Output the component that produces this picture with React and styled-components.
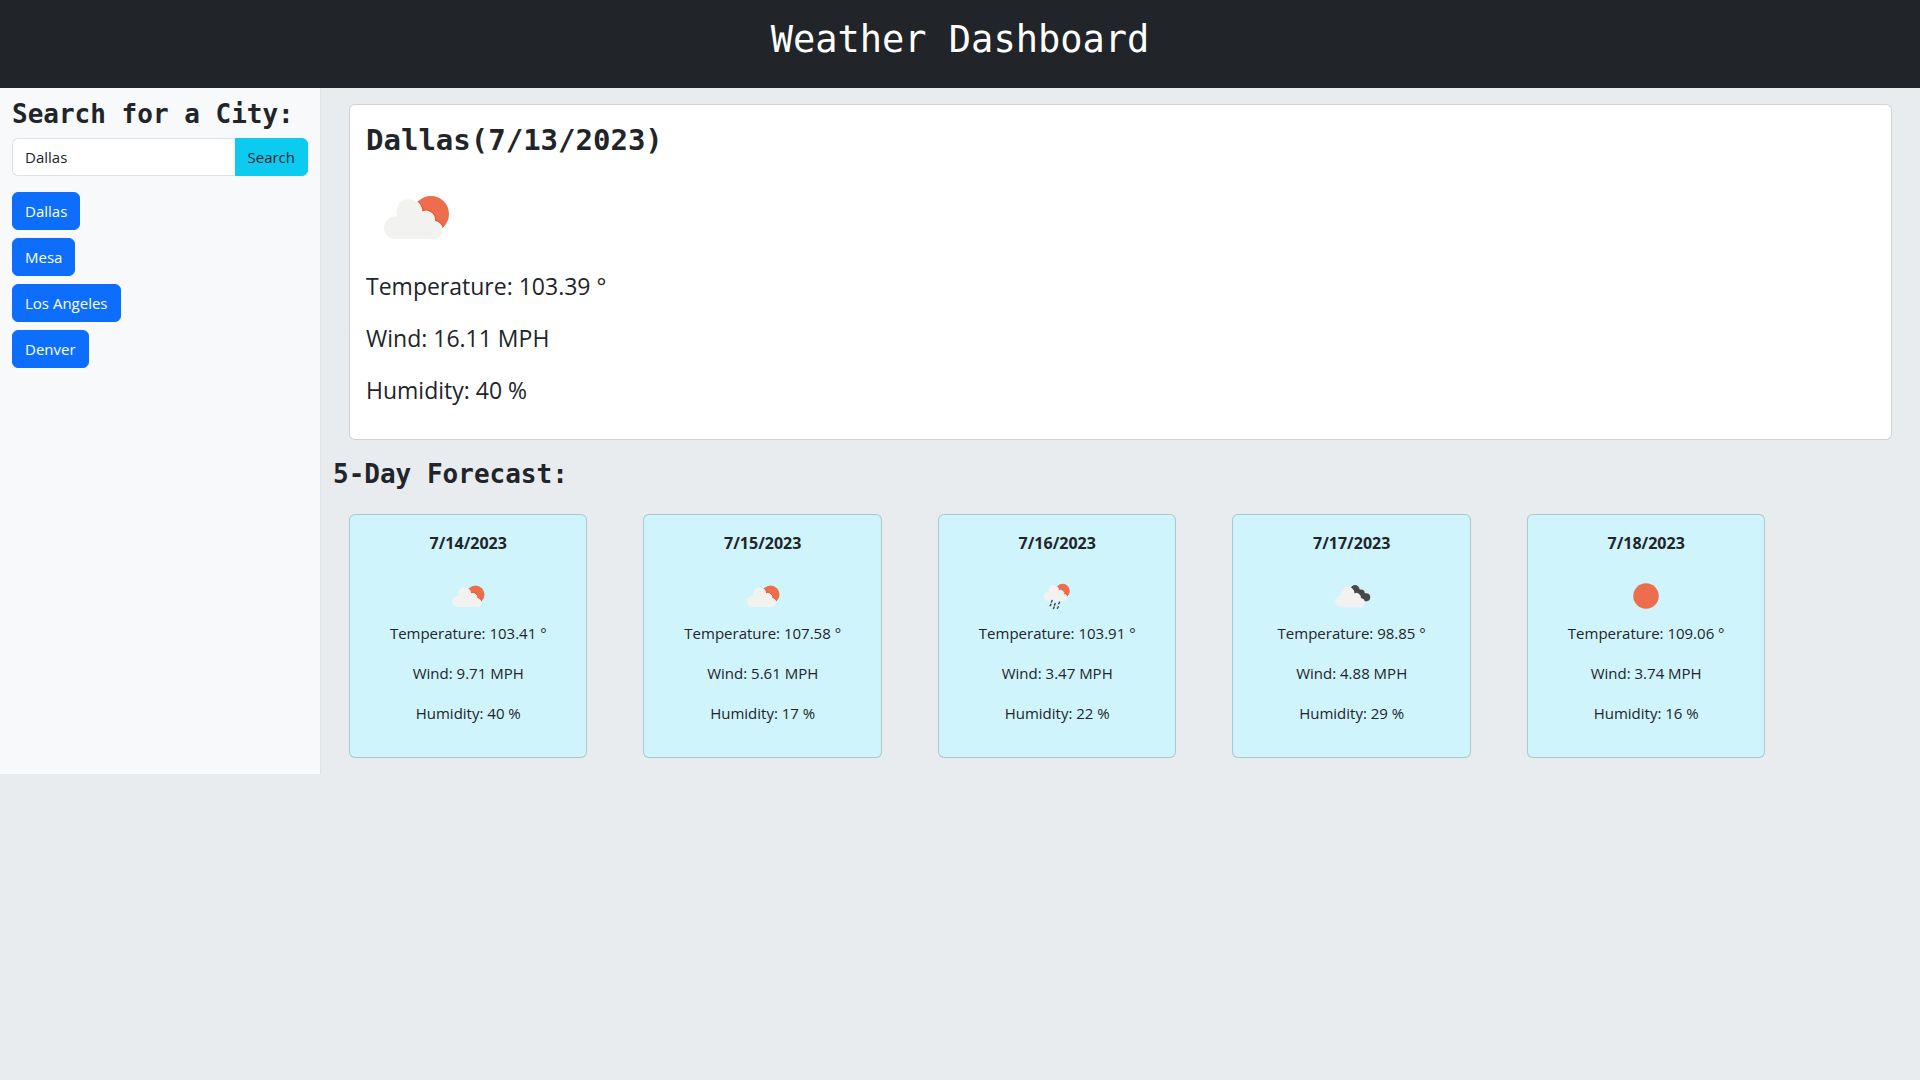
import React, { useState } from "react";
import styled, { createGlobalStyle } from "styled-components";

const SANS = '"Segoe UI", "Open Sans", "Noto Sans", sans-serif';
const MONO = 'Consolas, "DejaVu Sans Mono", "Liberation Mono", monospace';

const GlobalStyle = createGlobalStyle`
  *, *::before, *::after { box-sizing: border-box; }
  body {
    margin: 0;
    background: #e9ecef;
    color: #212529;
    font: 400 15px/24px ${SANS};
  }
  h1, h2, h3, p, ul { margin: 0; padding: 0; }
`;

const Header = styled.header`
  padding: 16px 16px 24px;
  background: #212529;
  color: #fff;
  text-align: center;
`;

const PageTitle = styled.h1`
  font: 400 37px/48px ${MONO};
`;

const Layout = styled.div`
  display: grid;
  grid-template-columns: minmax(0, 1fr) minmax(0, 5fr);
`;

const Sidebar = styled.aside`
  padding: 8px 12px;
  background: #f8f9fa;
`;

const Main = styled.main`
  padding: 0 12px;
  border-left: 1px solid #dee2e6;
`;

const SectionTitle = styled.h2`
  margin-bottom: 6px;
  font: 700 26px/36px ${MONO};
`;

const SearchForm = styled.form`
  display: flex;
  margin-bottom: 16px;
`;

const SearchInput = styled.input`
  flex: 1;
  min-width: 0;
  height: 38px;
  padding: 6px 12px;
  border: 1px solid #dee2e6;
  border-right: 0;
  border-radius: 6px 0 0 6px;
  background: #fff;
  color: #212529;
  font: inherit;
`;

const Button = styled.button`
  height: 38px;
  padding: 6px 12px;
  border: 1px solid #0d6efd;
  border-radius: 6px;
  background: #0d6efd;
  color: #fff;
  font: inherit;
  cursor: pointer;
`;

const SearchButton = styled(Button)`
  border-color: #0dcaf0;
  border-radius: 0 6px 6px 0;
  background: #0dcaf0;
  color: #212529;
`;

const History = styled.ul`
  display: flex;
  flex-direction: column;
  align-items: flex-start;
  gap: 8px;
  list-style: none;
`;

const HistoryItem = styled.li`
  display: flex;
`;

const Card = styled.article`
  margin: 16px;
  padding: 16px;
  border: 1px solid rgba(0, 0, 0, 0.175);
  border-radius: 6px;
  background: #fff;
`;

const CurrentTitle = styled.h2`
  margin-bottom: 8px;
  font: 700 29px/38px ${MONO};
`;

const CurrentReading = styled.p`
  margin-bottom: 14px;
  font-size: 23px;
  line-height: 38px;
`;

const Forecast = styled.div`
  display: flex;
  flex-wrap: wrap;
`;

const ForecastCard = styled(Card)`
  width: calc(100% / 6 - 24px);
  margin-right: 40px;
  background: #cff4fc;
  text-align: center;
`;

const ForecastDate = styled.h3`
  margin-bottom: 16px;
  font-size: 16px;
  font-weight: 700;
  line-height: 24px;
`;

const Reading = styled.p`
  margin-bottom: 16px;
`;

const IconSvg = styled.svg`
  display: block;
  width: ${(p) => p.$size}px;
  height: ${(p) => p.$size}px;
  margin: ${(p) => (p.$centered ? "0 auto" : "0")};
`;

const CLOUD =
  "M29.3 72 A11.3 11.3 0 0 1 29.3 49.4 H31.2 A12.5 12.5 0 1 1 55.2 46 A8.3 8.3 0 0 1 67.8 54.8 A8.7 8.7 0 0 1 69.4 72 Z";

function SunCloud({ id }) {
  return (
    <>
      <clipPath id={id}>
        <circle cx="65" cy="47" r="18" />
      </clipPath>
      <circle cx="65" cy="47" r="18" fill="#ec6e4c" />
      <g clipPath={`url(#${id})`} fill="none">
        <path d={CLOUD} stroke="#e9532a" strokeWidth="4" />
        <path d={CLOUD} stroke="#fdf6f4" strokeWidth="2" />
      </g>
      <path d={CLOUD} fill="#f2f2f0" />
    </>
  );
}

const DROPS = [[39.6, 60.5], [54.3, 64], [37, 68], [45.6, 66.7], [43.6, 73.6], [51.6, 73]];

function WeatherIcon({ kind, label, size, centered, id }) {
  return (
    <IconSvg viewBox="0 0 100 100" role="img" aria-label={label} $size={size} $centered={centered}>
      {kind === "sun" && <circle cx="50" cy="50" r="25.5" fill="#ec6e4c" />}
      {kind === "partly" && <SunCloud id={id} />}
      {kind === "rain" && (
        <>
          <g transform="translate(9.2 2.4) scale(0.8)">
            <SunCloud id={id} />
          </g>
          <g stroke="#484848" strokeWidth="3" strokeLinecap="round">
            {DROPS.map(([x, y]) => (
              <line key={x} x1={x + 0.7} y1={y - 1.5} x2={x - 0.7} y2={y + 1.5} />
            ))}
          </g>
        </>
      )}
      {kind === "clouds" && (
        <g transform="translate(-1 0)">
          <g fill="#484848">
            <circle cx="57" cy="37.3" r="9.2" />
            <circle cx="69" cy="44.5" r="7.5" />
            <circle cx="79.4" cy="52.3" r="8" />
            <path d="M52 42 L62 34 L79 46 L78 60.3 L66 58 Z" />
          </g>
          <path d={CLOUD} fill="#f2f2f0" stroke="#e6f7fb" strokeWidth="1.5" />
          <path d={CLOUD} fill="#f2f2f0" />
        </g>
      )}
    </IconSvg>
  );
}

const CITIES = ["Dallas", "Mesa", "Los Angeles", "Denver"];

const DAYS = [
  { date: "7/14/2023", kind: "partly", label: "Partly cloudy", temp: "103.41", wind: "9.71", humidity: 40 },
  { date: "7/15/2023", kind: "partly", label: "Partly cloudy", temp: "107.58", wind: "5.61", humidity: 17 },
  { date: "7/16/2023", kind: "rain", label: "Rain", temp: "103.91", wind: "3.47", humidity: 22 },
  { date: "7/17/2023", kind: "clouds", label: "Broken clouds", temp: "98.85", wind: "4.88", humidity: 29 },
  { date: "7/18/2023", kind: "sun", label: "Clear sky", temp: "109.06", wind: "3.74", humidity: 16 },
];

export default function App() {
  const [query, setQuery] = useState("Dallas");
  return (
    <>
      <GlobalStyle />
      <Header>
        <PageTitle>Weather Dashboard</PageTitle>
      </Header>
      <Layout>
        <Sidebar>
          <SectionTitle>
            <label htmlFor="city">Search for a City:</label>
          </SectionTitle>
          <SearchForm onSubmit={(e) => e.preventDefault()}>
            <SearchInput id="city" type="text" value={query} onChange={(e) => setQuery(e.target.value)} />
            <SearchButton type="submit">Search</SearchButton>
          </SearchForm>
          <History>
            {CITIES.map((city) => (
              <HistoryItem key={city}>
                <Button type="button" onClick={() => setQuery(city)}>{city}</Button>
              </HistoryItem>
            ))}
          </History>
        </Sidebar>
        <Main>
          <Card>
            <CurrentTitle>Dallas(7/13/2023)</CurrentTitle>
            <WeatherIcon kind="partly" label="Partly cloudy" size={100} id="sun-current" />
            <CurrentReading>Temperature: 103.39 °</CurrentReading>
            <CurrentReading>Wind: 16.11 MPH</CurrentReading>
            <CurrentReading>Humidity: 40 %</CurrentReading>
          </Card>
          <SectionTitle>5-Day Forecast:</SectionTitle>
          <Forecast>
            {DAYS.map((day, i) => (
              <ForecastCard key={day.date}>
                <ForecastDate>{day.date}</ForecastDate>
                <WeatherIcon kind={day.kind} label={day.label} size={50} centered id={`sun-${i}`} />
                <Reading>Temperature: {day.temp} °</Reading>
                <Reading>Wind: {day.wind} MPH</Reading>
                <Reading>Humidity: {day.humidity} %</Reading>
              </ForecastCard>
            ))}
          </Forecast>
        </Main>
      </Layout>
    </>
  );
}
